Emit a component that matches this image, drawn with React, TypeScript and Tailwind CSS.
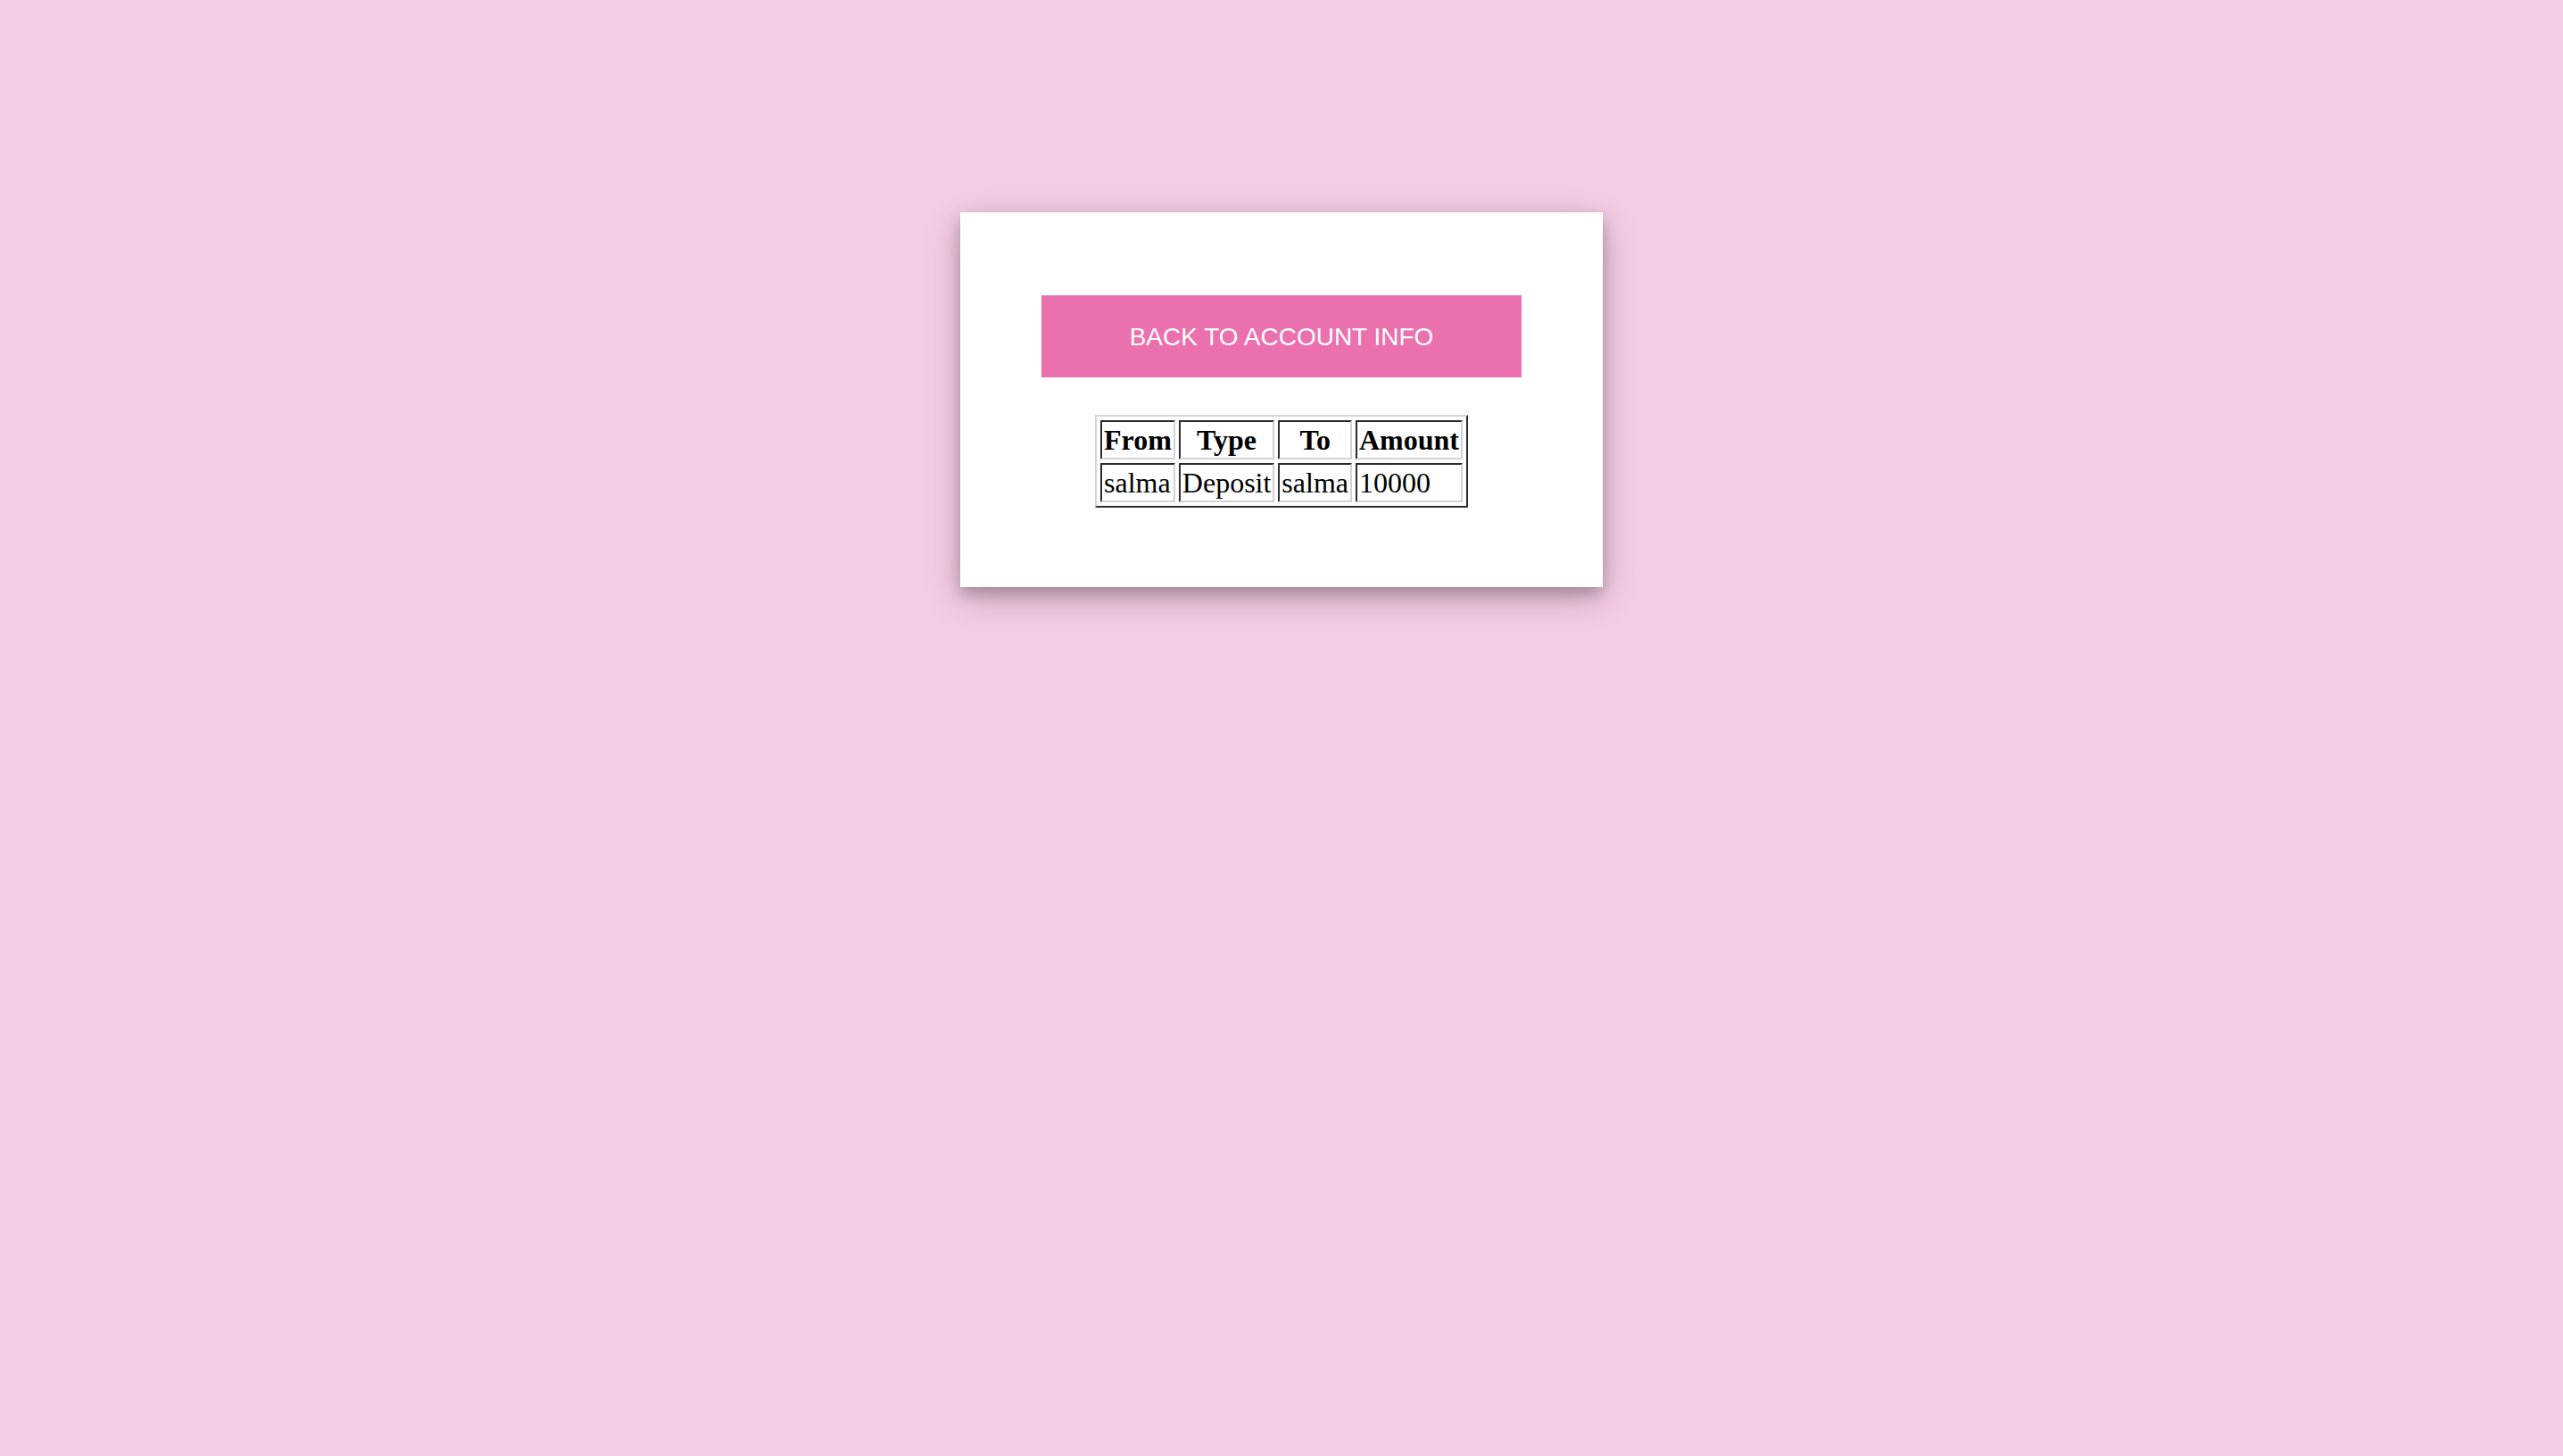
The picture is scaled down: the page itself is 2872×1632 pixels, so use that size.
import React from "react";

export default function App() {
  const cell = "border-2 border-t-[#2b2b2b] border-l-[#2b2b2b] border-b-[#d3d3d3] border-r-[#d3d3d3] p-[2px] leading-[36px] align-middle";
  return (
    <div className="min-h-[1632px] w-full bg-[#f4cce4] flex flex-col items-center pt-[238px]">
      <div className="w-[720px] h-[420px] bg-white flex flex-col items-center pt-[93px] shadow-[0_8px_16px_0_rgba(0,0,0,0.22),0_12px_40px_0_rgba(0,0,0,0.2)]">
        <button className="w-[538px] h-[92px] bg-[#eb71ae] text-white text-[28px] font-['Liberation_Sans',Arial,sans-serif] flex items-center justify-center pt-[2px]">
          BACK TO ACCOUNT INFO
        </button>
        <table className="mt-[42px] border-separate border-spacing-[4px] border-2 border-t-[#d3d3d3] border-l-[#d3d3d3] border-b-[#2b2b2b] border-r-[#2b2b2b] text-black text-[32px] font-['Liberation_Serif','Times_New_Roman',serif]">
          <thead>
            <tr>
              <th className={cell + " font-bold text-center"}>From</th>
              <th className={cell + " font-bold text-center"}>Type</th>
              <th className={cell + " font-bold text-center"}>To</th>
              <th className={cell + " font-bold text-center"}>Amount</th>
            </tr>
          </thead>
          <tbody>
            <tr>
              <td className={cell + " text-left"}>salma</td>
              <td className={cell + " text-left"}>Deposit</td>
              <td className={cell + " text-left"}>salma</td>
              <td className={cell + " text-left"}>10000</td>
            </tr>
          </tbody>
        </table>
      </div>
    </div>
  );
}
